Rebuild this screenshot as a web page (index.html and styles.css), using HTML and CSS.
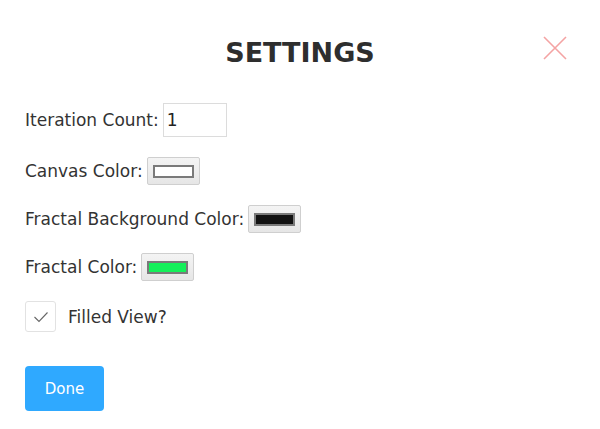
FILE: index.html
```html
<!DOCTYPE html>
<html>
<head>
<meta charset="utf-8">
<link rel="stylesheet" href="styles.css">
</head>
<body>
<div class="modal">
  <div class="header">
    <h1 class="title">SETTINGS</h1>
    <button class="close" aria-label="Close">
      <svg width="24" height="24" viewBox="0 0 24 24"><path d="M1 1 L23 23 M23 1 L1 23" stroke="#f4a3a3" stroke-width="1.6" fill="none"/></svg>
    </button>
  </div>
  <div class="form">
    <div class="row">
      <label class="label">Iteration Count:</label>
      <input class="num" type="text" value="1">
    </div>
    <div class="row">
      <label class="label">Canvas Color:</label>
      <button class="color"><span class="swatch swatch-white"></span></button>
    </div>
    <div class="row">
      <label class="label">Fractal Background Color:</label>
      <button class="color"><span class="swatch swatch-black"></span></button>
    </div>
    <div class="row">
      <label class="label">Fractal Color:</label>
      <button class="color"><span class="swatch swatch-green"></span></button>
    </div>
    <div class="row check-row">
      <span class="checkbox">
        <svg width="16" height="12" viewBox="0 0 16 12"><path d="M1.5 6 L6 10.5 L14.5 1.5" stroke="#666" stroke-width="1.1" fill="none"/></svg>
      </span>
      <span class="label">Filled View?</span>
    </div>
    <div class="actions">
      <button class="done">Done</button>
    </div>
  </div>
</div>
</body>
</html>
```
FILE: styles.css
```css
html, body {
  margin: 0;
  padding: 0;
  background: #fff;
}
body {
  font-family: "DejaVu Sans", "Open Sans", sans-serif;
  color: #333;
}
.modal {
  width: 600px;
  padding: 0 25px;
  box-sizing: border-box;
}
.header {
  position: relative;
  height: 103px;
  display: flex;
  justify-content: center;
  align-items: flex-start;
}
.title {
  margin: 37px 0 0;
  font-size: 27px;
  font-weight: bold;
  letter-spacing: 0;
  color: #2e2e2e;
  line-height: 32px;
}
.close {
  position: absolute;
  right: 8px;
  top: 36px;
  border: 0;
  background: none;
  padding: 0;
  width: 24px;
  height: 24px;
}
.close svg { display: block; }
.form {
  display: flex;
  flex-direction: column;
}
.row {
  display: flex;
  align-items: center;
  font-size: 17px;
  color: #333;
}
.label {
  font-size: 17px;
  margin-right: 4px;
}
.num {
  width: 64px;
  height: 34px;
  box-sizing: border-box;
  border: 1px solid #dcdcdc;
  padding: 0 3px;
  font-family: inherit;
  font-size: 17px;
  color: #222;
  outline: none;
}
.row + .row { margin-top: 20px; }
.color {
  width: 53px;
  height: 28px;
  box-sizing: border-box;
  border: 1px solid #cfcfcf;
  border-radius: 2px;
  background: linear-gradient(#f4f4f4, #e6e6e6);
  padding: 0;
  display: flex;
  align-items: center;
  justify-content: center;
}
.swatch {
  display: block;
  width: 41px;
  height: 13px;
  box-sizing: border-box;
  border: 2px solid #7a7a7a;
}
.swatch-white { background: #fff; }
.swatch-black { background: #111; }
.swatch-green { background: #14f05a; }
.check-row { margin-top: 21px; }
.checkbox {
  width: 31px;
  height: 31px;
  box-sizing: border-box;
  border: 1px solid #e2e2e2;
  border-radius: 3px;
  display: flex;
  align-items: center;
  justify-content: center;
  margin-right: 12px;
}
.checkbox svg { display: block; }
.actions { margin-top: 34px; }
.done {
  width: 79px;
  height: 45px;
  border: 0;
  border-radius: 4px;
  background: #2fa9ff;
  color: #fff;
  font-family: inherit;
  font-size: 15px;
}
```
